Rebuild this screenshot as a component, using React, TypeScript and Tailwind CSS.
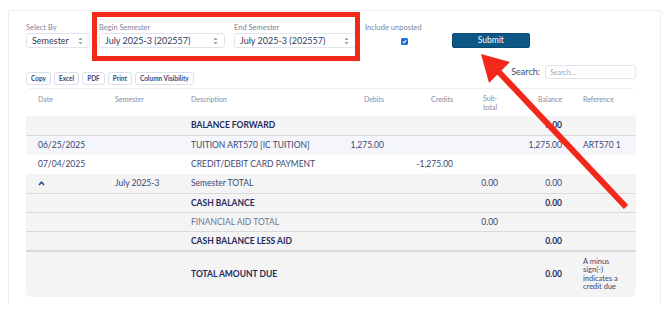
import React from "react";

type Row = {
  date?: string;
  chevron?: boolean;
  semester?: string;
  desc: string;
  debit?: string;
  credit?: string;
  sub?: string;
  balance?: string;
  reference?: string;
  bold?: boolean;
  muted?: boolean;
  bg: string;
  border?: string;
  h: string;
};

const rows: Row[] = [
  { desc: "BALANCE FORWARD", balance: "0.00", bold: true, bg: "bg-[#f4f4f5]", border: "border-b border-[#d8d9dc]", h: "h-[20px]" },
  { date: "06/25/2025", desc: "TUITION ART570 [IC TUITION]", debit: "1,275.00", balance: "1,275.00", reference: "ART570 1", bg: "bg-[#f4f6fb]", h: "h-[19px]" },
  { date: "07/04/2025", desc: "CREDIT/DEBIT CARD PAYMENT", credit: "-1,275.00", bg: "bg-white", h: "h-[19px]" },
  { chevron: true, semester: "July 2025-3", desc: "Semester TOTAL", sub: "0.00", balance: "0.00", bg: "bg-[#f4f4f5]", border: "border-b border-[#d8d9dc]", h: "h-[20px]" },
  { desc: "CASH BALANCE", balance: "0.00", bold: true, bg: "bg-[#f4f4f5]", border: "border-b border-[#d8d9dc]", h: "h-[19px]" },
  { desc: "FINANCIAL AID TOTAL", sub: "0.00", muted: true, bg: "bg-[#f4f4f5]", border: "border-b border-[#d8d9dc]", h: "h-[19px]" },
  { desc: "CASH BALANCE LESS AID", balance: "0.00", bold: true, bg: "bg-[#f4f4f5]", border: "border-b-2 border-[#d8d9dc]", h: "h-[20px]" },
];

const cols = "grid grid-cols-[77px_76px_140px_77px_69px_45px_64px_62px]";

function Select({ value, w }: { value: string; w: string }) {
  return (
    <div className={`${w} h-[15px] flex items-center justify-between rounded-[3px] border border-[#e1e4ec] bg-white pl-[5px] pr-[6px]`}>
      <span className="text-[9px] text-[#2f3b5e]">{value}</span>
      <svg width="5" height="8" viewBox="0 0 5 8">
        <path d="M2.5 0.5 L4.5 3 H0.5 Z" fill="#9aa0ad" />
        <path d="M2.5 7.5 L4.5 5 H0.5 Z" fill="#9aa0ad" />
      </svg>
    </div>
  );
}

function Field({ label, value, w }: { label: string; value: string; w: string }) {
  return (
    <div className="flex flex-col">
      <span className="text-[7.5px] leading-[10px] text-[#7c839a]">{label}</span>
      <Select value={value} w={w} />
    </div>
  );
}

export default function App() {
  return (
    <div className="relative w-[670px] h-[317px] bg-white font-['Lato',sans-serif] overflow-hidden">
      <div className="ml-[8px] mt-[10px] w-[653px] h-[293px] border-l border-t border-r border-[#eceef4] pl-[17px] pt-[12px]">

        {/* Filter form */}
        <div className="flex items-start">
          <Field label="Select By" value="Semester" w="w-[64px]" />
          <div className="ml-[9px]">
            <Field label="Begin Semester" value="July 2025-3 (202557)" w="w-[126px]" />
          </div>
          <div className="ml-[9px]">
            <Field label="End Semester" value="July 2025-3 (202557)" w="w-[122px]" />
          </div>
          <div className="ml-[9px] flex flex-col">
            <span className="text-[7.5px] leading-[10px] text-[#7c839a]">Include unposted</span>
            <div className="mt-[5px] ml-[36px] w-[7px] h-[7px] rounded-[1.5px] bg-[#1b6fd8] flex items-center justify-center">
              <svg width="5" height="5" viewBox="0 0 5 5">
                <path d="M0.8 2.6 L2 3.8 L4.2 1.2" stroke="white" strokeWidth="1.1" fill="none" />
              </svg>
            </div>
          </div>
          <button className="ml-[30px] mt-[10px] w-[78px] h-[15px] rounded-[2px] bg-[#0d5786] border border-[#0a4a73] text-white text-[8.5px] leading-none">
            Submit
          </button>
        </div>

        {/* Export buttons + search */}
        <div className="mt-[17px] flex items-start justify-between w-[610px]">
          <div className="mt-[7px] flex gap-[3px]">
            {["Copy", "Excel", "PDF", "Print", "Column Visibility"].map((b) => (
              <span key={b} className="h-[13px] px-[4px] flex items-center rounded-[3px] border border-[#dbe0ec] text-[6.5px] font-bold text-[#3d4a78]">
                {b}
              </span>
            ))}
          </div>
          <div className="flex items-center gap-[5px]">
            <span className="text-[9px] text-[#3c4a6e]">Search:</span>
            <div className="w-[91px] h-[14px] rounded-[3px] border border-[#dfe2ea] pl-[4px] flex items-center text-[7px] text-[#a0a6b6]">
              Search...
            </div>
          </div>
        </div>

        {/* Ledger table */}
        <div className="mt-[3px] w-[610px] rounded-[6px] border-t border-[#eceef4] overflow-hidden">
          <div className={`${cols} h-[27px] bg-white text-[7px] text-[#868ca2] pt-[5px]`}>
            <span className="pl-[12px]">Date</span>
            <span className="pl-[12px]">Semester</span>
            <span className="pl-[12px]">Description</span>
            <span className="text-right pr-[12px]">Debits</span>
            <span className="text-right pr-[12px]">Credits</span>
            <span className="pl-[18px] leading-[9px]">Sub-<br />total</span>
            <span className="text-right pr-[12px]">Balance</span>
            <span className="pl-[9px]">Reference</span>
          </div>

          {rows.map((r, i) => {
            const txt = r.bold ? "font-bold text-[#1f2b5b]" : r.muted ? "text-[#6c7491]" : "text-[#3b4770]";
            return (
              <div key={i} className={`${cols} ${r.h} ${r.bg} ${r.border ?? ""} items-center text-[8.5px]`}>
                <span className="pl-[12px] text-[#3b4770] flex items-center">
                  {r.chevron ? (
                    <svg width="7" height="5" viewBox="0 0 7 5">
                      <path d="M1 4 L3.5 1.3 L6 4" stroke="#1c4f8c" strokeWidth="1.6" fill="none" />
                    </svg>
                  ) : r.date}
                </span>
                <span className="pl-[12px] text-[#3b4770]">{r.semester}</span>
                <span className={`pl-[12px] whitespace-nowrap ${txt}`}>{r.desc}</span>
                <span className="text-right pr-[12px] text-[#3b4770]">{r.debit}</span>
                <span className="text-right pr-[12px] text-[#3b4770]">{r.credit}</span>
                <span className="text-right pr-[12px] text-[#3b4770]">{r.sub}</span>
                <span className={`text-right pr-[12px] ${r.bold ? "font-bold text-[#1f2b5b]" : "text-[#3b4770]"}`}>{r.balance}</span>
                <span className="pl-[9px] text-[#3b4770]">{r.reference}</span>
              </div>
            );
          })}

          <div className={`${cols} h-[45px] bg-[#f4f4f5] items-center text-[8.5px]`}>
            <span />
            <span />
            <span className="pl-[12px] font-bold text-[#1f2b5b] whitespace-nowrap">TOTAL AMOUNT DUE</span>
            <span />
            <span />
            <span />
            <span className="text-right pr-[12px] font-bold text-[#1f2b5b]">0.00</span>
            <span className="pl-[9px] text-[7.5px] leading-[8.5px] text-[#3b4770]">
              A minus<br />sign(-)<br />indicates a<br />credit due
            </span>
          </div>
        </div>
      </div>

      {/* Annotation: red box around semester selects */}
      <div className="absolute left-[92px] top-[12px] w-[268px] h-[49px] border-[5px] border-[#f2281a]" />

      {/* Annotation: arrow pointing at Submit */}
      <svg className="absolute left-0 top-0" width="670" height="317" viewBox="0 0 670 317">
        <line x1="626" y1="207" x2="497" y2="70" stroke="#f2281a" strokeWidth="6" />
        <polygon points="481,54 510,62 489,83" fill="#f2281a" />
      </svg>
    </div>
  );
}
